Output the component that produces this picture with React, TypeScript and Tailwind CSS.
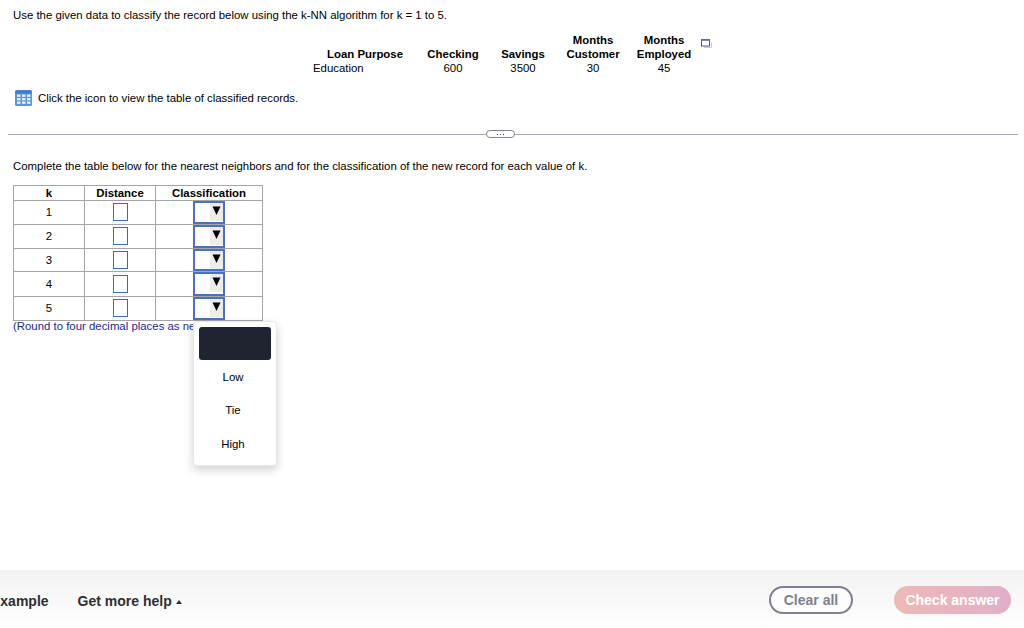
import React from 'react'

const rows = ['1', '2', '3', '4', '5']
const rowHeights = ['h-[24px]', 'h-[24px]', 'h-[23px]', 'h-[25px]', 'h-[24px]']

function GridIcon() {
  return (
    <svg width="17" height="16" viewBox="0 0 17 16" className="shrink-0" aria-hidden>
      <rect x="0" y="0" width="17" height="16" rx="1.5" fill="#5b93dc" />
      <rect x="0.5" y="0.5" width="16" height="3" rx="1" fill="#3f7ccb" />
      {[4.5, 8, 11.5].map((y) =>
        [2, 7, 12].map((x) => <rect key={`${x}-${y}`} x={x} y={y} width="3.5" height="2.4" fill="#e4eefa" />),
      )}
    </svg>
  )
}

function PopoutIcon() {
  return (
    <svg width="11" height="10" viewBox="0 0 11 10" className="mt-[6px] ml-[2px] shrink-0" aria-hidden>
      <path d="M3 8.5h7.5V3.5" fill="none" stroke="#c3c8e4" strokeWidth="1" />
      <rect x="0.5" y="0.5" width="8" height="6.5" fill="#fff" stroke="#4a5199" strokeWidth="1" />
      <rect x="0.5" y="0.5" width="8" height="1.5" fill="#7d83bb" />
    </svg>
  )
}

function SelectBox() {
  return (
    <div className="w-[32px] h-full border-2 border-[#4a72c4] flex justify-end items-start">
      <div className="w-[13px] h-[18px] bg-[#ececec] flex justify-center pt-[3px]">
        <svg width="9" height="9" viewBox="0 0 9 9" aria-hidden>
          <path d="M0.5 0.5h8L4.5 9z" fill="#000" />
        </svg>
      </div>
    </div>
  )
}

export default function App() {
  return (
    <div className="relative w-[1024px] h-[628px] overflow-hidden bg-white flex flex-col text-[11.4px] leading-[14px] text-black font-['Liberation_Sans',Arial,sans-serif]">
      <div className="flex-1 min-h-0">
        <p className="pl-[13px] pt-[8px]">Use the given data to classify the record below using the k-NN algorithm for k = 1 to 5.</p>

        <div className="flex pl-[313px] mt-[11px]">
          <div className="grid grid-cols-[104px_72px_68px_72px_70px] text-center">
            <div className="font-bold self-end">Loan Purpose</div>
            <div className="font-bold self-end">Checking</div>
            <div className="font-bold self-end">Savings</div>
            <div className="font-bold">Months<br />Customer</div>
            <div className="font-bold">Months<br />Employed</div>
            <div className="text-left">Education</div>
            <div>600</div>
            <div>3500</div>
            <div>30</div>
            <div>45</div>
          </div>
          <PopoutIcon />
        </div>

        <div className="flex items-center gap-[6px] pl-[15px] mt-[15px]">
          <GridIcon />
          <span>Click the icon to view the table of classified records.</span>
        </div>

        <div className="flex items-center pl-[8px] pr-[6px] mt-[23px] h-[10px]">
          <div className="w-[478px] h-px bg-[#a4a9b8]" />
          <div className="w-[29px] h-[8px] rounded-full border border-[#7f8696] flex items-center justify-center gap-[2px]">
            <span className="w-px h-px bg-[#444]" />
            <span className="w-px h-px bg-[#444]" />
            <span className="w-px h-px bg-[#444]" />
          </div>
          <div className="flex-1 h-px bg-[#a4a9b8]" />
        </div>

        <p className="pl-[13px] mt-[20px]">Complete the table below for the nearest neighbors and for the classification of the new record for each value of k.</p>

        <div className="ml-[13px] mt-[12px] w-[250px] border border-[#a5a5a5] border-b-0 border-r-0">
          <div className="grid grid-cols-[71px_71px_107px] h-[15px] font-bold text-center border-b border-[#a5a5a5]">
            <div className="border-r border-[#a5a5a5]">k</div>
            <div className="border-r border-[#a5a5a5]">Distance</div>
            <div className="border-r border-[#a5a5a5] leading-[15px]">Classification</div>
          </div>
          {rows.map((k, i) => (
            <div key={k} className={`grid grid-cols-[71px_71px_107px] border-b border-[#a5a5a5] ${rowHeights[i]}`}>
              <div className="border-r border-[#a5a5a5] flex items-center justify-center pb-[1px]">{k}</div>
              <div className="border-r border-[#a5a5a5] flex items-center justify-center pb-[1px]">
                <div className="w-[15px] h-[18px] border border-[#3f68bd]" />
              </div>
              <div className="border-r border-[#a5a5a5] flex justify-start pl-[37px]">
                <SelectBox />
              </div>
            </div>
          ))}
        </div>
        <p className="pl-[13px] -mt-[2px] text-[#1b2a8c]">(Round to four decimal places as needed.)</p>
      </div>

      <div className="h-[58px] shrink-0 bg-gradient-to-b from-[#f2f2f2] to-white flex items-center justify-between pt-[3px] pr-[13px] text-[14px] font-bold text-[#2d2f33]">
        <div className="flex items-center">
          <span className="-ml-[9px]">Example</span>
          <span className="ml-[29px]">Get more help</span>
          <svg width="6" height="4" viewBox="0 0 6 4" className="ml-[4px] mt-[2px]" aria-hidden>
            <path d="M0 4L3 0l3 4z" fill="#2d2f33" />
          </svg>
        </div>
        <div className="flex items-center gap-[41px] mb-[2px]">
          <div className="w-[84px] h-[28px] rounded-full border-2 border-[#7d8191] bg-white/60 text-[#7d8191] flex items-center justify-center">Clear all</div>
          <div className="w-[117px] h-[28px] rounded-full bg-gradient-to-r from-[#eeb9b5] to-[#e2aec9] text-white flex items-center justify-center">Check answer</div>
        </div>
      </div>

      {/* open listbox of the first empty classification cell */}
      <div className="absolute left-[193px] top-[321px] w-[84px] h-[145px] bg-white border border-[#e8e8e8] rounded-[4px] shadow-[0_4px_10px_rgba(0,0,0,0.18)] py-[5px] pl-[5px] pr-[9px]">
        <div className="h-[33px] -mr-[4px] rounded-[3px] bg-[#1f2430]" />
        <div className="mt-[10px] text-center h-[16px]">Low</div>
        <div className="mt-[17px] text-center h-[16px]">Tie</div>
        <div className="mt-[18px] text-center h-[16px]">High</div>
      </div>
    </div>
  )
}
